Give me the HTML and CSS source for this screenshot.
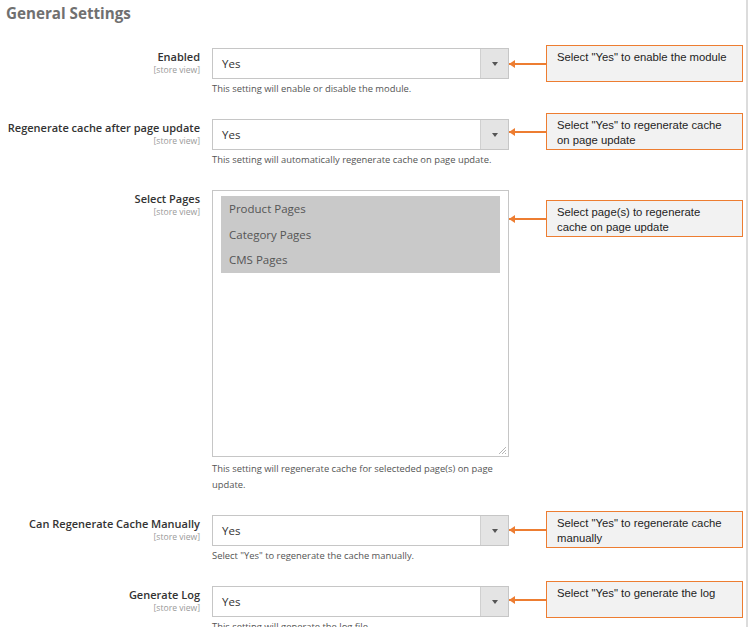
FILE: index.html
```html
<!DOCTYPE html>
<html>
<head>
<meta charset="utf-8">
<link rel="stylesheet" href="styles.css">
</head>
<body>
<div class="page">
  <h1 class="title">General Settings</h1>

  <div class="row row-1">
    <div class="label"><span class="name">Enabled</span><span class="scope">[store view]</span></div>
    <div class="control">
      <div class="select"><span class="value">Yes</span><span class="btn"><span class="tri"></span></span></div>
      <div class="note">This setting will enable or disable the module.</div>
    </div>
    <div class="annot">
      <div class="arrow"></div>
      <div class="callout">Select "Yes" to enable the module</div>
    </div>
  </div>

  <div class="row row-2">
    <div class="label"><span class="name">Regenerate cache after page update</span><span class="scope">[store view]</span></div>
    <div class="control">
      <div class="select"><span class="value">Yes</span><span class="btn"><span class="tri"></span></span></div>
      <div class="note">This setting will automatically regenerate cache on page update.</div>
    </div>
    <div class="annot">
      <div class="arrow"></div>
      <div class="callout">Select "Yes" to regenerate cache<br>on page update</div>
    </div>
  </div>

  <div class="row row-3">
    <div class="label"><span class="name">Select Pages</span><span class="scope">[store view]</span></div>
    <div class="control">
      <div class="multi">
        <div class="opt">Product Pages</div>
        <div class="opt">Category Pages</div>
        <div class="opt">CMS Pages</div>
        <svg class="grip" width="9" height="9" viewBox="0 0 9 9"><path d="M8 1 L1 8 M8 4 L4 8 M8 7 L7 8" stroke="#b5b5b5" stroke-width="1" fill="none"/></svg>
      </div>
      <div class="note note-multi">This setting will regenerate cache for selecteded page(s) on page<br>update.</div>
    </div>
    <div class="annot">
      <div class="arrow"></div>
      <div class="callout">Select page(s) to regenerate<br>cache on page update</div>
    </div>
  </div>

  <div class="row row-4">
    <div class="label"><span class="name">Can Regenerate Cache Manually</span><span class="scope">[store view]</span></div>
    <div class="control">
      <div class="select"><span class="value">Yes</span><span class="btn"><span class="tri"></span></span></div>
      <div class="note">Select "Yes" to regenerate the cache manually.</div>
    </div>
    <div class="annot">
      <div class="arrow"></div>
      <div class="callout">Select "Yes" to regenerate cache<br>manually</div>
    </div>
  </div>

  <div class="row row-5">
    <div class="label"><span class="name">Generate Log</span><span class="scope">[store view]</span></div>
    <div class="control">
      <div class="select"><span class="value">Yes</span><span class="btn"><span class="tri"></span></span></div>
      <div class="note">This setting will generate the log file.</div>
    </div>
    <div class="annot">
      <div class="arrow"></div>
      <div class="callout">Select "Yes" to generate the log</div>
    </div>
  </div>
</div>
</body>
</html>
```

FILE: styles.css
```css
html, body {
  margin: 0;
  padding: 0;
  background: #ffffff;
  overflow: hidden;
}

.page {
  width: 748px;
  height: 627px;
  border-right: 2px solid #dcdcdc;
  box-sizing: border-box;
  font-family: "Open Sans", "Noto Sans", sans-serif;
  overflow: hidden;
}

.title {
  margin: 0 0 22px 0;
  padding-left: 6px;
  font-size: 15.2px;
  line-height: 26px;
  font-weight: 700;
  color: #707070;
}

.row {
  display: grid;
  grid-template-columns: 212px 297px 37px 197px;
  margin-bottom: 22px;
  align-items: start;
}

.label {
  display: flex;
  flex-direction: column;
  align-items: flex-end;
  padding-right: 12px;
  padding-top: 2px;
}

.name {
  font-size: 11px;
  line-height: 14px;
  font-weight: 600;
  color: #333333;
  white-space: nowrap;
}

.scope {
  margin-top: 0;
  font-size: 8.6px;
  line-height: 12px;
  color: #9a9a9a;
}

.select {
  display: flex;
  height: 31px;
  border: 1px solid #c6c6c6;
  box-sizing: border-box;
  background: #fff;
}

.value {
  flex: 1;
  padding-left: 9px;
  font-size: 11.5px;
  line-height: 29px;
  color: #333;
}

.btn {
  width: 27px;
  display: flex;
  align-items: center;
  justify-content: center;
  background: #e4e4e4;
  border-left: 1px solid #d0d0d0;
}

.tri {
  width: 0;
  height: 0;
  border-left: 3px solid transparent;
  border-right: 3px solid transparent;
  border-top: 4px solid #555;
}

.note {
  margin-top: 2px;
  font-size: 9.4px;
  line-height: 16px;
  color: #555;
  white-space: nowrap;
}

.note-multi {
  margin-top: 4px;
}

.multi {
  position: relative;
  height: 267px;
  border: 1px solid #c6c6c6;
  box-sizing: border-box;
  padding: 5px 8px 0 8px;
  background: #fff;
}

.opt {
  height: 25.5px;
  line-height: 25.5px;
  padding-left: 8px;
  background: #c9c9c9;
  font-size: 11.5px;
  color: #555;
}

.grip {
  position: absolute;
  right: 1px;
  bottom: 1px;
}

.annot {
  grid-column: 3 / 5;
  display: flex;
  align-items: center;
  margin-top: -3px;
}

.row-2 .annot { margin-top: -6px; }
.row-3 .annot { margin-top: 10px; }
.row-4 .annot { margin-top: -4px; }
.row-5 .annot { margin-top: -5px; }

.arrow {
  position: relative;
  width: 37px;
  height: 2px;
  background: #ed7d31;
}

.arrow::before {
  content: "";
  position: absolute;
  left: 0;
  top: -3px;
  width: 0;
  height: 0;
  border-top: 4px solid transparent;
  border-bottom: 4px solid transparent;
  border-right: 6px solid #ed7d31;
}

.callout {
  width: 197px;
  height: 37px;
  box-sizing: border-box;
  border: 1px solid #ed7d31;
  background: #f2f2f2;
  padding: 4px 10px 0 10px;
  font-family: "Liberation Sans", Arial, sans-serif;
  font-size: 11.3px;
  line-height: 15px;
  color: #1e1e1e;
}
```
